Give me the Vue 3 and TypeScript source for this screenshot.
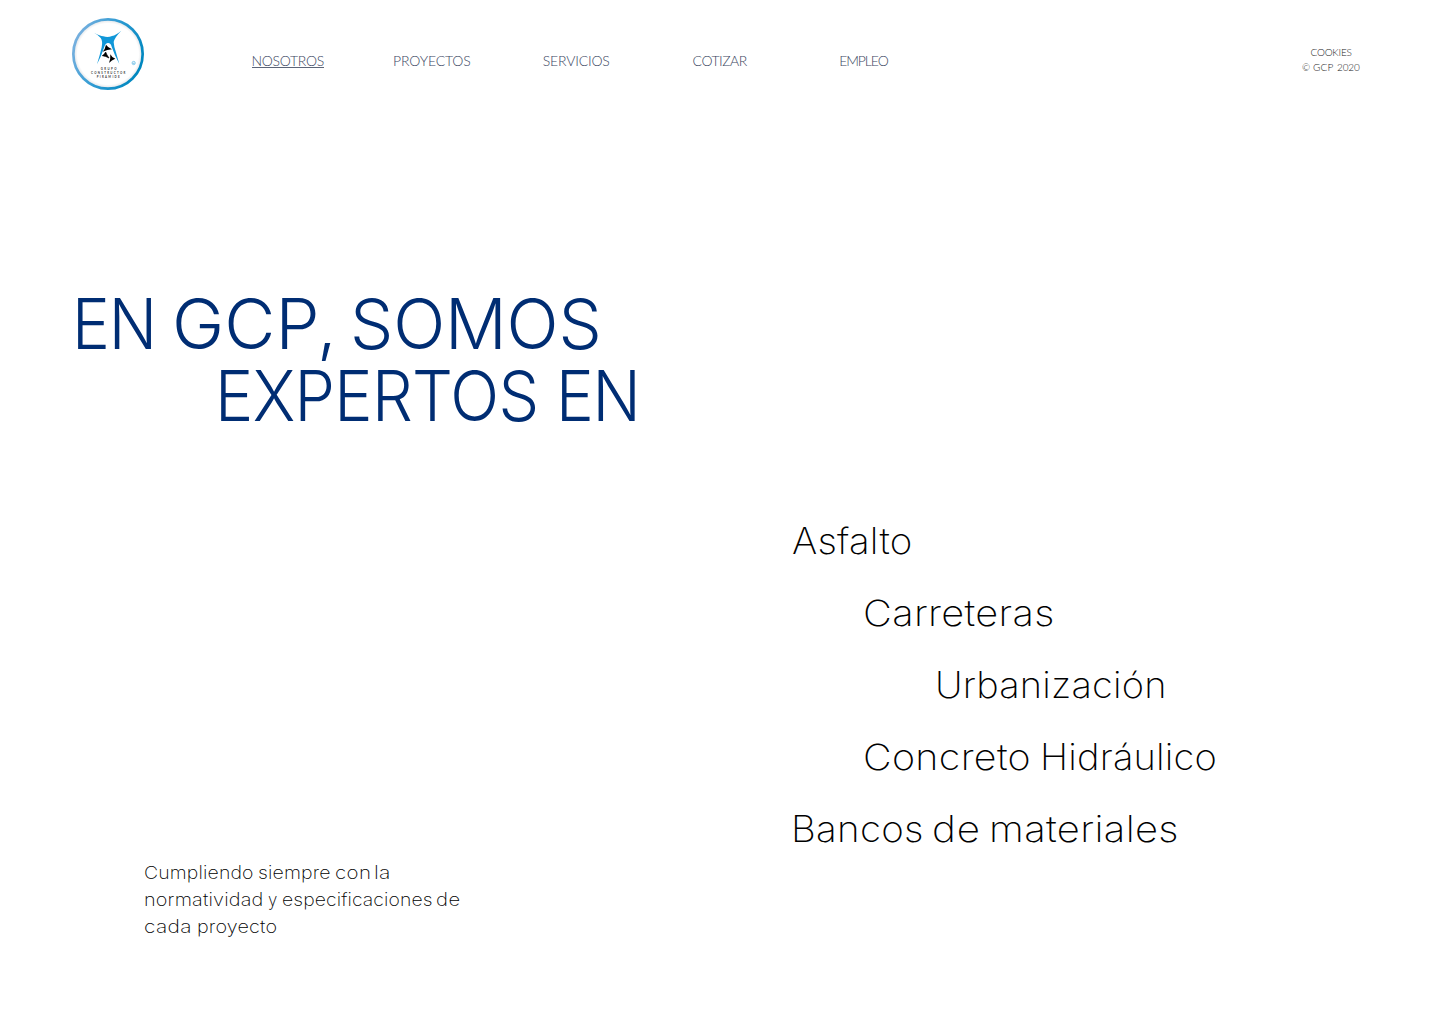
<script setup lang="ts">
// A word with the left and right edges of its visible glyphs, measured from its line's left edge.
type Word = [text: string, from: number, to: number]
// stretch: share of the width difference taken by the glyphs; tracking takes the rest.
interface Face { family: string; weight: number; size: number; stretch: number }

const ctx = document.createElement('canvas').getContext('2d')!

function setLine(words: Word[], face: Face) {
  ctx.font = `${face.weight} ${face.size}px ${face.family}`
  const space = ctx.measureText(' ').width
  const placed = words.map(([text, from, to]) => {
    const m = ctx.measureText(text)
    const ink = m.actualBoundingBoxRight + m.actualBoundingBoxLeft
    const gaps = text.length - 1
    const scale = gaps ? 1 + ((to - from) / ink - 1) * face.stretch : (to - from) / ink
    const tracking = gaps ? ((to - from) / scale - ink) / gaps : 0
    return { text, start: from + m.actualBoundingBoxLeft * scale, scale, tracking, advance: m.width }
  })
  return placed.map((w, i) => {
    const next = placed[i + 1]
    const natural = w.advance + w.text.length * w.tracking
    const box = next ? (next.start - w.start) / w.scale : natural
    return {
      text: next ? w.text + ' ' : w.text,
      style: {
        letterSpacing: w.tracking.toFixed(3) + 'px',
        wordSpacing: next ? (box - natural - space - w.tracking).toFixed(3) + 'px' : '0',
        width: box.toFixed(2) + 'px',
        marginLeft: i === 0 ? w.start.toFixed(2) + 'px' : '0',
        marginRight: (box * (w.scale - 1)).toFixed(2) + 'px',
        transform: `scaleX(${w.scale.toFixed(4)})`,
      },
    }
  })
}

const titleFace: Face = { family: 'Inter', weight: 300, size: 69.5, stretch: 0.85 }
const listFace: Face = { family: 'Inter', weight: 200, size: 36, stretch: 0.85 }
const noteFace: Face = { family: 'Inter', weight: 200, size: 18, stretch: 0.85 }
const navFace: Face = { family: 'Lato', weight: 300, size: 14, stretch: 0 }
const legalFace: Face = { family: 'Lato', weight: 300, size: 10, stretch: 0 }

const nav = ([
  ['NOSOTROS', 36.5, 107.8],
  ['PROYECTOS', 34, 110.3],
  ['SERVICIOS', 38.8, 105.3],
  ['COTIZAR', 44.6, 99.8],
  ['EMPLEO', 48.2, 96.7],
] as Word[]).map((w) => ({ name: w[0], words: setLine([w], navFace) }))

const legal = [
  setLine([['COOKIES', 14.5, 55.5]], legalFace),
  setLine([['©', 6, 13.7], ['GCP', 17, 37.5], ['2020', 41, 64]], legalFace),
]

const title = [
  setLine([['EN', 5.3, 79.5], ['GCP,', 104, 259], ['SOMOS', 282, 526]], titleFace),
  setLine([['EXPERTOS', 149, 464], ['EN', 489, 563]], titleFace),
]

const services = [
  setLine([['Asfalto', 1, 118]], listFace),
  setLine([['Carreteras', 73.3, 260]], listFace),
  setLine([['Urbanización', 146, 371]], listFace),
  setLine([['Concreto', 73.3, 236.5], ['Hidráulico', 251, 422.5]], listFace),
  setLine([['Bancos', 2.5, 129.5], ['de', 142.3, 186], ['materiales', 200.7, 384.5]], listFace),
]

const note = [
  setLine([['Cumpliendo', 0.7, 108.5], ['siempre', 114.9, 186], ['con', 191.7, 224.7], ['la', 231, 245.5]], noteFace),
  setLine([['normatividad', 1, 118.5], ['y', 124.3, 133.7], ['especificaciones', 139.5, 287.7], ['de', 293.5, 316]], noteFace),
  setLine([['cada', 0.7, 46.3], ['proyecto', 53.7, 132]], noteFace),
]
</script>

<template>
  <div class="page">
    <header class="header">
      <svg class="logo" viewBox="12 12 216 216" role="img" aria-label="Grupo Constructor Piramide">
        <defs>
          <linearGradient id="ring" x1="0" y1="0.2" x2="1" y2="0.6">
            <stop offset="0" stop-color="#7fb2e0" />
            <stop offset="0.5" stop-color="#2f9bd3" />
            <stop offset="1" stop-color="#0087bf" />
          </linearGradient>
          <radialGradient id="disc">
            <stop offset="0.88" stop-color="#fff" />
            <stop offset="1" stop-color="#dcdfe3" />
          </radialGradient>
        </defs>
        <circle cx="120" cy="120" r="104" fill="url(#disc)" stroke="url(#ring)" stroke-width="8" />
        <path
          fill="#1097d8"
          d="M78 56 Q96 66 106 67 Q120 71 132 66 Q144 63 160 50 Q140 70 137 84 Q138 98 143 112 Q148 130 154 150 Q140 124 131 98 Q128 87 121 87 Q113 86 109 98 Q101 124 87 151 Q96 122 101 100 Q105 82 98 72 Q90 62 78 56Z"
        />
        <path d="M114 92 Q120 101 132 106 Q118 107 104 113 Q112 104 114 92Z" />
        <path d="M113 114 Q116 123 123 132 Q113 126 103 125 Q110 121 113 114Z" stroke="#000" stroke-width="2" />
        <path d="M127 121 Q131 130 142 134 Q131 138 123 147 Q128 135 127 121Z" />
        <g class="brand">
          <text x="98" y="168" textLength="48">GRUPO</text>
          <text x="69" y="180" textLength="103">CONSTRUCTOR</text>
          <text x="86" y="192" textLength="69">PIRAMIDE</text>
        </g>
        <circle cx="197" cy="147" r="5" fill="#d9eef9" stroke="#53b2df" stroke-width="1.8" />
        <text class="mark" x="194.6" y="149.8">R</text>
      </svg>

      <nav class="nav">
        <a v-for="(item, i) in nav" :key="item.name" class="line nav-item">
          <span v-for="w in item.words" :key="w.text" :class="{ active: i === 0 }" :style="w.style">{{ w.text }}</span>
        </a>
      </nav>

      <div class="legal">
        <div v-for="(line, i) in legal" :key="i" class="line">
          <span v-for="w in line" :key="w.text" :style="w.style">{{ w.text }}</span>
        </div>
      </div>
    </header>

    <main>
      <h1 class="title">
        <span v-for="(line, i) in title" :key="i" class="line">
          <span v-for="w in line" :key="w.text" :style="w.style">{{ w.text }}</span>
        </span>
      </h1>
      <div class="columns">
        <p class="note">
          <span v-for="(line, i) in note" :key="i" class="line">
            <span v-for="w in line" :key="w.text" :style="w.style">{{ w.text }}</span>
          </span>
        </p>
        <ul class="services">
          <li v-for="(line, i) in services" :key="i" class="line">
            <span v-for="w in line" :key="w.text" :style="w.style">{{ w.text }}</span>
          </li>
        </ul>
      </div>
    </main>
  </div>
</template>

<style>
body {
  margin: 0;
  background: #fff;
}
</style>

<style scoped>
.page {
  width: 1440px;
  height: 1024px;
  overflow: hidden;
  box-sizing: border-box;
  padding: 0 72px;
  font-family: Inter, 'Liberation Sans', sans-serif;
  font-weight: 200;
  color: #000;
}

.line {
  display: flex;
  white-space: pre;
}

.line > span {
  flex: none;
  transform-origin: 0 50%;
}

.header {
  display: flex;
  align-items: flex-start;
  height: 108px;
}

.logo {
  width: 72px;
  height: 72px;
  margin-top: 18px;
}

.brand {
  font: 700 8.5px Lato, sans-serif;
  fill: #3a3a3a;
}

.mark {
  font: 700 7px Lato, sans-serif;
  fill: #53b2df;
}

.nav {
  display: flex;
  margin: 50px 0 0 72px;
}

.nav-item {
  width: 144px;
  font-family: Lato, sans-serif;
  font-weight: 300;
  font-size: 14px;
  line-height: 21px;
  color: #3a4661;
}

.active {
  box-shadow: inset 0 -3px #fff, inset 0 -4px #5c6578;
}

.legal {
  width: 72px;
  margin: 45px 0 0 auto;
  font-family: Lato, sans-serif;
  font-weight: 300;
  font-size: 10px;
  line-height: 15px;
  color: #222;
}

.title {
  margin: 180px 0 0;
  font-size: 69.5px;
  font-weight: 300;
  line-height: 72px;
  color: #002d73;
}

.columns {
  display: flex;
  align-items: flex-end;
  margin-top: 73px;
}

.note {
  width: 720px;
  margin: 0 0 -75px;
  padding-left: 72px;
  box-sizing: border-box;
  font-size: 18px;
  line-height: 27px;
}

.services {
  margin: 0;
  padding: 0;
  list-style: none;
  font-size: 36px;
  line-height: 72px;
}
</style>
